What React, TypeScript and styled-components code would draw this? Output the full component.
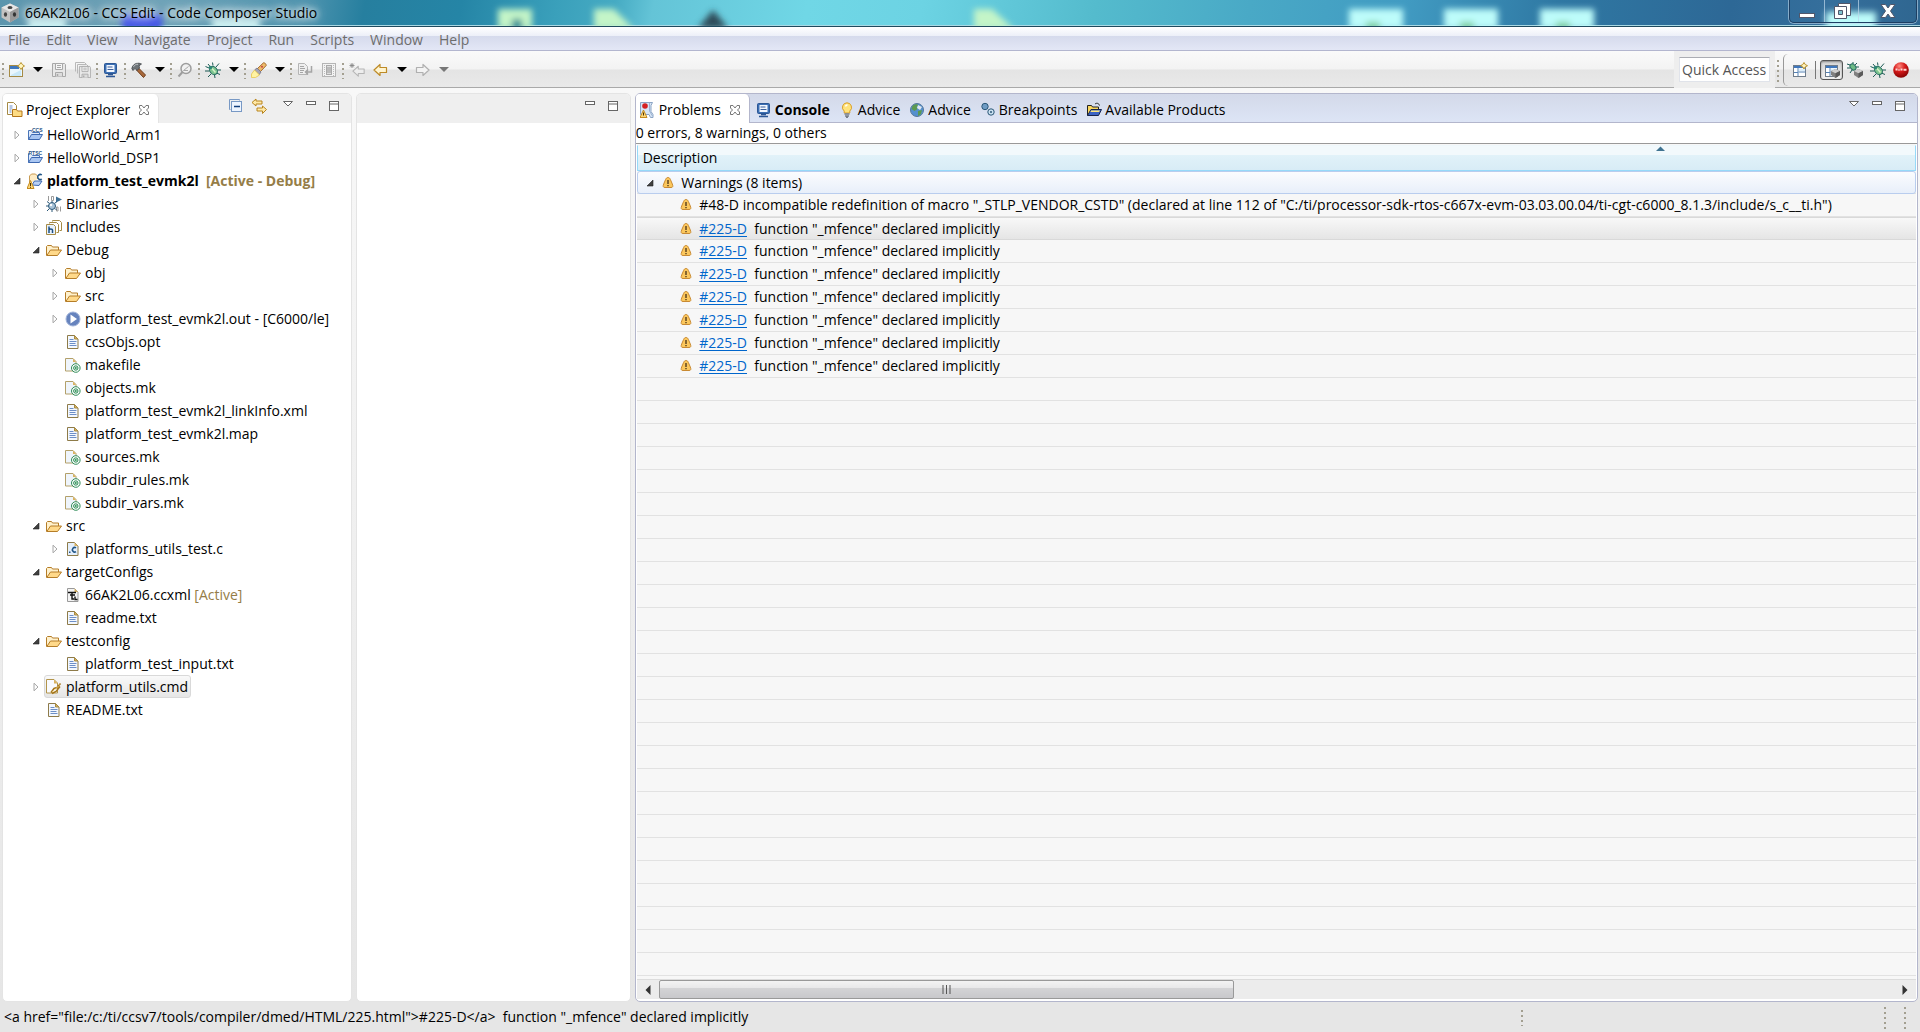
import React from "react";
import styled, { createGlobalStyle, css } from "styled-components";

const GlobalStyle = createGlobalStyle`
  * { box-sizing: border-box; }
  html, body, #root { height: 100%; margin: 0; }
  body {
    font-family: "Open Sans", "Noto Sans", sans-serif;
    font-size: 14px;
    line-height: 23px;
    color: #000;
    background: #e6e6e6;
    overflow: hidden;
  }
  button, input { font: inherit; color: inherit; }
  svg { display: block; flex: none; }
`;

const bare = css`
  border: 0;
  padding: 0;
  background: none;
  display: flex;
  align-items: center;
  justify-content: center;
  flex: none;
`;

const Shell = styled.div`
  height: 100%;
  min-height: 100vh;
  display: flex;
  flex-direction: column;
`;

/* ---------- title bar ---------- */

const TitleBar = styled.header`
  height: 27px;
  flex: none;
  position: relative;
  display: flex;
  justify-content: space-between;
  align-items: flex-start;
  overflow: hidden;
  background: linear-gradient(
    100deg,
    #5b95ad 0%, #6fa3b8 8%, #4c93ae 16%, #267f9f 19%, #2585a6 24%, #3aa0bb 29%,
    #46abc3 32%, #64c4d7 34%, #70d7e6 42%, #6cd3e3 48%, #54bbcd 57%, #49a9c6 65%,
    #419bc2 73%, #2f78a3 81%, #2d6896 90%, #356f9c 95%, #2f6690 100%
  );
  border-bottom: 1px solid #1f4a5e;
  box-shadow: inset 0 -1px 0 #a9d9e4;
`;

const TitleArt = styled.svg`
  position: absolute;
  inset: 0;
  width: 100%;
  height: 26px;
`;

const TitleText = styled.h1`
  position: relative;
  display: flex;
  align-items: center;
  gap: 5px;
  margin: 0;
  height: 26px;
  font-size: 14px;
  font-weight: 400;
  line-height: 26px;
  text-shadow: 0 0 6px #fff, 0 0 10px #fff, 0 0 16px rgba(255, 255, 255, 0.7);
`;

const WindowButtons = styled.div`
  position: relative;
  display: flex;
  height: 23px;
  margin-right: 3px;
  border: 1px solid #1d3f63;
  border-top: 0;
  border-radius: 0 0 5px 5px;
  box-shadow: 0 0 0 1px rgba(190, 215, 235, 0.6);
`;

const WindowButton = styled.button<{ $wide?: boolean }>`
  ${bare}
  width: ${(p) => (p.$wide ? 58 : 34)}px;
  height: 22px;
  & + & { border-left: 1px solid rgba(190, 215, 235, 0.7); }
`;

/* ---------- menu ---------- */

const MenuBar = styled.nav`
  height: 24px;
  flex: none;
  display: flex;
  padding-top: 1px;
  background: linear-gradient(#fff 0, #eceff8 9px, #d5daec 9px, #e3e7f6 23px);
  border-bottom: 1px solid #b3b6cf;
`;

const MenuItem = styled.button`
  ${bare}
  padding: 0 8px;
  color: #6d6d6d;
`;

/* ---------- toolbar ---------- */

const ToolBar = styled.div`
  height: 37px;
  flex: none;
  display: flex;
  align-items: stretch;
  justify-content: space-between;
  background: linear-gradient(#fafafa 0, #f3f3f3 18px, #e4e4e4 19px, #e9e9e9 36px);
`;

const ToolGroup = styled.div`
  flex: 1;
  display: flex;
  align-items: center;
  padding: 2px 0 0 1px;
  border-bottom: 1px solid #a9a9a9;
`;

const Grip = styled.span<{ $tall?: boolean }>`
  width: 4px;
  height: ${(p) => (p.$tall ? 24 : 18)}px;
  flex: none;
  background: repeating-linear-gradient(
    transparent 0, transparent 2px, #a39f90 2px, #a39f90 4px, transparent 4px, transparent 5px
  );
  background-size: 2px 100%;
  background-position: 1px 0;
  background-repeat: no-repeat;
`;

const ToolButton = styled.button`
  ${bare}
  width: 24px;
  height: 24px;
`;

const DropButton = styled.button<{ $dim?: boolean }>`
  ${bare}
  width: 18px;
  height: 24px;
  color: ${(p) => (p.$dim ? "#777" : "#000")};
`;

const QuickWrap = styled.div`
  padding: 6px 5px 5px;
  background: #eee;
`;

const QuickInput = styled.input`
  display: block;
  width: 91px;
  height: 25px;
  padding: 0 2px;
  border: 1px solid #e0e3ea;
  border-top-color: #abadb3;
  background: #fff;
  outline: 0;
  &::placeholder { color: #555; opacity: 1; }
`;

const Perspectives = styled.div`
  display: flex;
  align-items: center;
  padding: 1px 8px 0 1px;
  border-bottom: 1px solid #a9a9a9;
`;

const PerspectiveList = styled.div`
  align-self: stretch;
  display: flex;
  align-items: center;
  margin: 2px 0 1px 3px;
  padding-left: 4px;
  border-left: 1px solid #999;
  border-radius: 5px 0 0 5px;
`;

const Divider = styled.span`
  width: 1px;
  height: 18px;
  margin: 0 4px;
  background: #777;
`;

const PerspectiveButton = styled.button<{ $active?: boolean }>`
  ${bare}
  width: 23px;
  height: 20px;
  border-radius: 3px;
  ${(p) =>
    p.$active &&
    css`
      border: 1px solid #555;
      background: linear-gradient(#d5d5d5, #f2f2f2);
      box-shadow: inset 0 1px 2px #888;
    `}
`;

/* ---------- work area ---------- */

const Workbench = styled.main`
  flex: 1;
  min-height: 0;
  display: grid;
  grid-template-columns: minmax(0, 350fr) minmax(0, 274fr) minmax(0, 1282fr);
  gap: 4px;
  padding: 5px 2px 0;
  background: linear-gradient(#f8f8f8, #e6e6e6);
`;

const Pane = styled.section<{ $active?: boolean }>`
  min-width: 0;
  min-height: 0;
  display: flex;
  flex-direction: column;
  overflow: hidden;
  background: #fff;
  border: 1px solid ${(p) => (p.$active ? "#b3b6cc" : "#e4e4e4")};
  border-radius: 5px;
  ${(p) => p.$active && css`padding-bottom: 2px;`}
`;

const TabStrip = styled.div<{ $active?: boolean }>`
  height: 29px;
  flex: none;
  display: flex;
  justify-content: space-between;
  background: ${(p) => (p.$active ? "linear-gradient(#d3d9e9, #dde5f6)" : "#efefef")};
  ${(p) => p.$active && css`box-shadow: inset 0 -1px 0 #b3b6cc;`}
`;

const Tabs = styled.div`
  flex: 1;
  display: flex;
`;

const Tab = styled.div<{ $selected?: boolean; $edge?: string }>`
  display: flex;
  align-items: center;
  padding: 2px 5px 0 4px;
  ${(p) =>
    p.$selected &&
    css`
      padding-right: 6px;
      margin-right: 2px;
      background: #fff;
      border-right: 1px solid ${p.$edge || "#e4e4e4"};
      border-radius: 0 5px 0 0;
    `}
`;

const TabButton = styled.button<{ $bold?: boolean }>`
  ${bare}
  gap: 3px;
  font-weight: ${(p) => (p.$bold ? 700 : 400)};
`;

const IconButton = styled.button`
  ${bare}
  width: 20px;
  height: 18px;
`;

const CloseButton = styled(IconButton)`
  width: 16px;
  margin-left: 6px;
`;

const PaneTools = styled.div`
  display: flex;
  align-items: flex-start;
  gap: 3px;
  padding: 3px 7px 0 0;
`;

const ToolSpacer = styled.span`
  width: 3px;
`;

/* ---------- tree ---------- */

const Tree = styled.ul`
  list-style: none;
  margin: 0;
  padding: 0;
`;

const TreeRow = styled.li<{ $depth: number }>`
  height: 23px;
  display: flex;
  align-items: center;
  padding-left: ${(p) => 6 + p.$depth * 19}px;
`;

const Toggle = styled.button`
  ${bare}
  width: 16px;
  height: 16px;
`;

const NodeLabel = styled.span<{ $selected?: boolean; $bold?: boolean }>`
  display: flex;
  align-items: center;
  gap: 4px;
  height: 23px;
  padding: 0 2px 0 1px;
  white-space: pre;
  border: 1px solid transparent;
  border-radius: 3px;
  font-weight: ${(p) => (p.$bold ? 700 : 400)};
  ${(p) =>
    p.$selected &&
    css`
      border-color: #d9d9d9;
      background: linear-gradient(#f9f9f9, #e6e6e6);
    `}
`;

const Decoration = styled.span`
  color: #957d47;
`;

/* ---------- problems ---------- */

const Summary = styled.p`
  margin: 0;
  flex: none;
  height: 21px;
  line-height: 20px;
  border-bottom: 1px solid #999;
`;

const TableArea = styled.div`
  flex: 1;
  min-height: 0;
  overflow: hidden;
  margin: 0 1px;
  padding-top: 1px;
  background: repeating-linear-gradient(#f7f7f7 0, #f7f7f7 22px, #e2e2e2 22px, #e2e2e2 23px);
  background-position: 0 4px;
`;

const ProblemTable = styled.table`
  width: 100%;
  border-collapse: separate;
  border-spacing: 0;
  table-layout: fixed;
`;

const HeadCell = styled.th`
  position: relative;
  height: 26px;
  padding: 0 5px 1px;
  text-align: left;
  font-weight: 400;
  line-height: 22px;
  border: 1px solid #96d9f9;
  border-top-color: #eef7fb;
  background: linear-gradient(#f2f9fc 0, #f2f9fc 9px, #e1f2f9 9px, #d8ecf6 100%);
`;

const SortMark = styled.svg`
  position: absolute;
  left: 80%;
  top: 0;
  margin-left: -4px;
`;

const ProblemCell = styled.td<{ $kind?: "group" | "focus" }>`
  height: 23px;
  padding: 0 0 0 ${(p) => (p.$kind === "group" ? 4 : 43)}px;
  overflow: hidden;
  white-space: pre;
  line-height: 22px;
  background: #f7f7f7;
  border-bottom: 1px solid #e2e2e2;
  ${(p) =>
    p.$kind === "group" &&
    css`
      border: 1px solid #b9cdee;
      border-radius: 3px;
      line-height: 21px;
      background: linear-gradient(#fbfcfe, #e8effa);
    `}
  ${(p) =>
    p.$kind === "focus" &&
    css`
      border-top: 1px solid #d9d9d9;
      border-bottom-color: #d9d9d9;
      line-height: 21px;
      background: linear-gradient(#f8f8f8, #e5e5e5);
    `}
`;

const CellRow = styled.div`
  display: flex;
  align-items: center;
  gap: 4px;
`;

const DiagnosticLink = styled.a`
  color: #0066cc;
  text-decoration: underline;
  text-underline-offset: 2px;
`;

const ScrollBar = styled.div`
  flex: none;
  height: 20px;
  margin: 0 1px;
  display: grid;
  grid-template-columns: 22px minmax(0, 573fr) minmax(0, 657fr) 22px;
  align-items: center;
  background: #ececec;
  border-top: 1px solid #dcdcdc;
`;

const ScrollThumb = styled.div`
  height: 19px;
  display: flex;
  align-items: center;
  justify-content: center;
  border: 1px solid #999;
  border-radius: 2px;
  background: linear-gradient(#f3f3f3 0, #e8e8e9 7px, #d4d4d6 7px, #c8c8cb 100%);
`;

const ScrollButton = styled.button`
  ${bare}
  height: 19px;
`;

/* ---------- status ---------- */

const StatusBar = styled.footer`
  flex: none;
  height: 30px;
  display: flex;
  align-items: center;
  padding: 0 13px 1px 4px;
  background: #e6e6e6;
  white-space: pre;
`;

const StatusText = styled.span`
  flex: 1516;
`;

const StatusSlot = styled.span`
  flex: 359;
`;

const StatusGrip = styled(Grip)`
  margin-right: 16px;
  &:last-child { margin-right: 0; }
`;

/* ---------- icons ---------- */

const Svg = ({ children, w = 16, h = 16 }: { children: React.ReactNode; w?: number; h?: number }) => (
  <svg width={w} height={h} viewBox={`0 0 ${w} ${h}`} fill="none" aria-hidden="true">
    {children}
  </svg>
);

const DownIcon = () => (
  <Svg w={10} h={6}><path d="M0 0h10L5 5z" fill="currentColor" /></Svg>
);

const NewIcon = () => (
  <Svg>
    <rect x="0.5" y="3.5" width="13" height="11" fill="#e9f6fd" stroke="#a58a45" />
    <path d="M1 4h9v3H1z" fill="#3f77bd" />
    <path d="M2 13l10-5v6H2z" fill="#c9e8f8" />
    <path d="M12 .5l1.400 2.100 2.100 1.400-2.100 1.400L12 7.500l-1.400-2.100L8.500 4l2.100-1.400z" fill="#fff6c0" stroke="#b9912c" />
  </Svg>
);

const Disk = ({ x = 0, y = 0 }: { x?: number; y?: number }) => (
  <g transform={`translate(${x} ${y})`} stroke="#a8a8a8">
    <path d="M.5.5h12l1 1v12H.5z" fill="#e8e8e8" />
    <path d="M3.500.5h7v6h-7z" fill="#f6f6f6" />
    <path d="M3.500 13.500v-4h7v4" fill="#dcdcdc" />
    <path d="M5 2.500h4M5 4.500h4" />
    <path d="M5.500 11v2" strokeWidth="1.500" />
  </g>
);
const SaveIcon = () => <Svg><Disk x={1} y={1} /></Svg>;
const SaveAllIcon = () => (
  <Svg>
    <path d="M.5 9.500v-9h9l1.500 1.500M2.500 11.500v-9h9l1.500 1.500" stroke="#b8b8b8" />
    <g transform="translate(4 4) scale(.86)"><Disk /></g>
  </Svg>
);

const ConsoleIcon = () => (
  <Svg>
    <rect x="1.500" y="1.500" width="12" height="10" rx="1" fill="#3b6fb4" stroke="#2d5795" />
    <rect x="3.500" y="3" width="8" height="7" fill="#f2f7ff" />
    <path d="M4.500 5h5M4.500 7.500h6" stroke="#3b5f9b" />
    <path d="M5 12.500h5M3 14.500h9" stroke="#2d5795" strokeWidth="1.500" />
  </Svg>
);

const HammerIcon = () => (
  <Svg>
    <path d="M7 5.500l7.500 7.500-2 2.500L5.500 8z" fill="#a9683a" stroke="#6f3d1b" />
    <path d="M.8 6.500C1.500 3 4 1 8 1.200L10.500 2 8 3.800 8.500 6l-2.500 2.500L4 6.500l-2 2z" fill="#6e7478" stroke="#3e4346" strokeWidth=".8" />
    <path d="M2.500 4.800C3.500 3 5 2.200 7 2.200" stroke="#c4c9cc" />
  </Svg>
);

const SearchIcon = () => (
  <Svg>
    <circle cx="9" cy="6.500" r="5" fill="#f1f1f1" stroke="#9d9d9d" strokeWidth="1.500" />
    <path d="M5.500 10L1.500 14.500" stroke="#9d9d9d" strokeWidth="2" />
    <path d="M11.500 4.500l-5 4h4.500" stroke="#a8a8a8" />
  </Svg>
);

const BugIcon = () => (
  <Svg>
    <path d="M4 6L.5 4.500M4.500 9L0 9M6 12l-3 3M8 3.500L7.500.5M11 5l3-3.500M12 8h4M11.500 11l3.500 1.500M9.500 13l.5 3M5.500 5L3 2" stroke="#1d5b55" />
    <ellipse cx="8.500" cy="8.500" rx="3.500" ry="4.500" transform="rotate(-40 8.500 8.500)" fill="#7cc48f" stroke="#22695f" />
    <path d="M7 6.500l3.500 4" stroke="#d5f2c8" strokeWidth="1.500" />
    <circle cx="5.500" cy="5.500" r="1.800" fill="#2f8577" />
  </Svg>
);

const TorchIcon = () => (
  <Svg>
    <path d="M6 7L12.500.8c1.500 0 2.700 1.200 2.700 2.700L9 10z" fill="#edbb6b" stroke="#a36a2c" />
    <path d="M3.500 8l2.500-2 4 4-2 3z" fill="#a4a4b4" stroke="#74748a" strokeWidth=".8" />
    <path d="M3.500 8l5 5-4 2.500L.5 15.500V12z" fill="#fff3a2" stroke="#e7c750" strokeWidth=".8" />
    <circle cx="11" cy="4.800" r="1" fill="#c44" />
  </Svg>
);

const WrapIcon = () => (
  <Svg>
    <path d="M1.500 1.500h6l3 3v8h-9z" fill="#efefef" stroke="#b5b5b5" />
    <path d="M3 4.500h4M3 6.500h5M3 8.500h4M3 10.500h3" stroke="#a5a5a5" />
    <path d="M14.500 4v6H8.500M11 7.500L8.500 10l2.500 2.500" stroke="#a5a5a5" strokeWidth="1.500" />
  </Svg>
);

const BlockIcon = () => (
  <Svg>
    <rect x="1.500" y="1.500" width="13" height="13" fill="#f3f3f3" stroke="#b5b5b5" />
    <path d="M3.500 3v11M12.500 3v11" stroke="#bbb" strokeDasharray="1 1" />
    <rect x="5.500" y="3.500" width="5" height="9" fill="#ddd" stroke="#aaa" />
    <path d="M6 6h4M6 8h4M6 10h4" stroke="#999" />
  </Svg>
);

const ArrowShape = ({ stroke, fill, flip }: { stroke: string; fill: string; flip?: boolean }) => (
  <path
    d="M1 8l6-5.500v3h6.500v5H7v3z"
    transform={flip ? "matrix(-1 0 0 1 15 0)" : undefined}
    fill={fill}
    stroke={stroke}
    strokeWidth="1.200"
    strokeLinejoin="round"
  />
);
const BackIcon = () => <Svg><ArrowShape stroke="#bd8a26" fill="#fff4cf" /></Svg>;
const ForwardIcon = () => <Svg><ArrowShape stroke="#b0b0b0" fill="#f3f3f3" flip /></Svg>;
const LastEditIcon = () => (
  <Svg>
    <g transform="translate(3 2) scale(.9)"><ArrowShape stroke="#b5b5b5" fill="#ededed" /></g>
    <path d="M3 1v5M.5 3.500h5M1.200 1.700l3.600 3.600M4.800 1.700L1.200 5.300" stroke="#888" strokeWidth=".9" />
  </Svg>
);

const PerspectiveGrid = () => (
  <>
    <rect x="1.500" y="3.500" width="12" height="11" fill="#fff" stroke="#6f7c8a" />
    <path d="M2 4h11v2H2z" fill="#3f77bd" />
    <path d="M6 6v8M6.500 10h7M2 10.500h4" stroke="#5582b5" />
    <path d="M7 6.500h6V9H7z" fill="#dceefb" />
  </>
);
const Cube = () => (
  <g transform="translate(7 7)">
    <path d="M4.500 0L9 2v4L4.500 9 0 6V2z" fill="#808080" />
    <path d="M4.500 0L9 2 4.500 4.300 0 2z" fill="#cfcfcf" />
    <path d="M4.500 4.300V9L9 6V2z" fill="#5a5a5a" />
  </g>
);
const OpenPerspectiveIcon = () => (
  <Svg>
    <PerspectiveGrid />
    <path d="M12 .5l1.200 2 2.300 1.200-2.300 1.300-1.200 2-1.200-2-2.300-1.300 2.300-1.200z" fill="#fff3bd" stroke="#b9912c" />
  </Svg>
);
const EditPerspectiveIcon = () => <Svg><PerspectiveGrid /><Cube /></Svg>;
const DebugPerspectiveIcon = () => (
  <Svg>
    <path d="M3 3L0 2M3 6H0M5 8l-2 3M6 2V0M8 3l2-2M9 5h3" stroke="#1d5b55" />
    <ellipse cx="6" cy="5" rx="2.500" ry="3.500" transform="rotate(-40 6 5)" fill="#6dbb85" stroke="#22695f" />
    <Cube />
  </Svg>
);
const SimpleIcon = () => (
  <Svg>
    <defs>
      <radialGradient id="ball" cx=".4" cy=".25" r=".8">
        <stop offset="0" stopColor="#ff8a80" />
        <stop offset=".45" stopColor="#d51a1a" />
        <stop offset="1" stopColor="#7d0000" />
      </radialGradient>
    </defs>
    <circle cx="8" cy="8" r="7.800" fill="url(#ball)" />
    <path d="M2.500 7.500h2M5.500 8h1M7.500 7.500h2M10.500 7.800h3" stroke="#ffd9d6" strokeWidth="2" />
  </Svg>
);

const MenuTriangleIcon = () => <Svg w={12} h={18}><path d="M1.500 4.500h9L6 9z" stroke="#666" fill="#fff" /></Svg>;
const MinimizeIcon = () => <Svg w={12} h={18}><rect x="1.500" y="4.500" width="9" height="3" fill="#fff" stroke="#666" /></Svg>;
const MaximizeIcon = () => (
  <Svg w={12} h={18}><rect x="1.500" y="4.500" width="9" height="9" fill="#fff" stroke="#666" /><path d="M1 7h10" stroke="#666" /></Svg>
);
const CloseIcon = () => (
  <Svg w={12} h={12}>
    <path d="M1.500 1.500h2.500L6 4l2-2.500h2.500V4L8.500 6l2 2v2.500H8L6 8l-2 2.500H1.500V8l2-2-2-2z" fill="#fff" stroke="#777" />
  </Svg>
);
const CollapseAllIcon = () => (
  <Svg>
    <path d="M2.500 11.500h-1v-10h10v1" stroke="#7899c5" />
    <rect x="3.500" y="3.500" width="10" height="10" fill="#eef5ff" stroke="#7899c5" />
    <path d="M6 8.500h6" stroke="#123f7c" strokeWidth="1.500" />
  </Svg>
);
const LinkEditorIcon = () => (
  <Svg>
    <path d="M1 4.500L5 1v2h6v3H5v2z" fill="#ffe9a8" stroke="#b9851e" />
    <path d="M15.500 11.500L11.500 8v2H6v3h5.500v2.500z" fill="#ffe9a8" stroke="#b9851e" />
  </Svg>
);

const ExplorerIcon = () => (
  <Svg>
    <path d="M.5.5h6l3 3v9h-9z" fill="#fff" stroke="#a58a45" />
    <path d="M2.500 4h3M2.500 6h3M2.500 8h2M2.500 10h2" stroke="#6d8fc7" />
    <path d="M5.500 7.500h4l1 1.500h4.500v5.500H5.500z" fill="#fddc84" stroke="#b4761a" />
  </Svg>
);

const ProjectFolder = () => (
  <>
    <path d="M1.500 12.500v-9h3l1 2h7v3" fill="#dfeafa" stroke="#4a75b8" />
    <path d="M1.500 12.500l3-5h11l-3 5z" fill="#a9c6f2" stroke="#3d68b0" />
  </>
);
const IconLabel = styled.text`
  font-family: "Liberation Sans", sans-serif;
  font-weight: 700;
`;
const CcsProjectIcon = () => (
  <Svg>
    <ProjectFolder />
    <path d="M5 0h11v5H5z" fill="#fff" />
    <IconLabel x="5" y="4.500" fontSize="5" fill="#1f5486">CCS</IconLabel>
  </Svg>
);
const RtscProjectIcon = () => (
  <Svg>
    <ProjectFolder />
    <path d="M2 0h14v5H2z" fill="#fff" />
    <IconLabel x="1.500" y="4.500" fontSize="5" fill="#1f5486">RTSC</IconLabel>
  </Svg>
);
const ActiveProjectIcon = () => (
  <Svg>
    <path d="M2.500 11V3l2-2h4l2 2v3" fill="#fdebc4" stroke="#c99b52" />
    <path d="M5 12l2.500-4h7.500l-3 4.500z" fill="#b9d0f5" stroke="#3d68b0" />
    <path d="M14.800 2A2.500 2.500 0 1 0 14.800 6" stroke="#1f5486" strokeWidth="1.500" />
    <path d="M3.500 7.500L7 15.500H0z" fill="#fcd676" stroke="#c48a1e" />
    <path d="M3.500 10v3M3.500 13.800v1" stroke="#4a2f00" />
  </Svg>
);
const BinariesIcon = () => (
  <Svg>
    <path d="M2.500 0v5M5.500 .5h2v4h-2zM10.500 11h1.500v4h-1.500zM14.500 10.500v5" stroke="#999" />
    <path d="M10 .5l6 3-6 3z" fill="#3c6f94" />
    <circle cx="6" cy="10" r="3.500" fill="#a8c3d8" stroke="#2c5878" />
    <path d="M3 7L1 5.500M2.500 10H0M3 13l-2 2M6 6.500V5M6 13.500V16M9 7l2-1.500M9 12.500l1.500 1.500" stroke="#2c5878" />
    <circle cx="5" cy="9" r="1.200" fill="#fff" />
  </Svg>
);
const IncludesIcon = () => (
  <Svg>
    <path d="M6.500 2.500v-1h7l2 2v8h-2" fill="#fff" stroke="#a58a45" />
    <path d="M3.500 4.500v-1h7l2 2v8h-2" fill="#fff" stroke="#a58a45" />
    <path d="M.5 5.500h7l2 2v8h-9z" fill="#e7f1fc" stroke="#a58a45" />
    <path d="M3 7.500v6.500M3 11c0-1.500 3.500-1.500 3.500 0v3" stroke="#1d4f83" strokeWidth="1.500" />
  </Svg>
);
const FolderIcon = () => (
  <Svg>
    <path d="M.5 13.500v-9l1-1h4l1 1.500h6v3" fill="#fff1cc" stroke="#b57d28" />
    <path d="M.8 13.500l3.700-5.500H15.500l-4 5.500z" fill="#ffd98a" stroke="#b57d28" strokeLinejoin="round" />
  </Svg>
);
const OutIcon = () => (
  <Svg>
    <circle cx="8" cy="8" r="7" fill="#6683bd" stroke="#9fb2d9" />
    <path d="M5.500 3.500L12 8l-6.500 4.500z" fill="#fff" />
  </Svg>
);
const FileIcon = () => (
  <Svg>
    <path d="M2.500 1.500h7l3.500 3.500v9.500H2.500z" fill="#f3f8ff" stroke="#8e7b49" />
    <path d="M9.500 1.500v3.500H13z" fill="#d9b25f" stroke="#a58a45" />
    <path d="M4.500 5.500h4M4.500 7.500h7M4.500 9.500h6M4.500 11.500h7" stroke="#6d8fc7" />
  </Svg>
);
const MakeIcon = () => (
  <Svg>
    <path d="M.5 1.500h7.500l3 3v9.500H.5z" fill="#eff5fc" stroke="#b3a06a" />
    <path d="M8 1.500v3.500h3z" fill="#d9b25f" />
    <circle cx="10.800" cy="11" r="4.300" fill="#fff" stroke="#2e8b57" />
    <circle cx="10.800" cy="11" r="2.200" fill="#e0f6e6" stroke="#2e8b57" />
    <circle cx="10.800" cy="11" r=".9" fill="#2e8b57" />
  </Svg>
);
const CFileIcon = () => (
  <Svg>
    <path d="M2.500 1.500h7l3.500 3.500v9.500H2.500z" fill="#e4effc" stroke="#8e7b49" />
    <path d="M9.500 1.500v3.500H13z" fill="#d9b25f" />
    <path d="M11 6.800a2.300 2.300 0 1 0 0 3.800" stroke="#1f5486" strokeWidth="1.600" />
    <path d="M4 10.500h1.500v1.500H4z" fill="#1f5486" />
  </Svg>
);
const CcxmlIcon = () => (
  <Svg>
    <path d="M2.500 1.500h7l3.500 3.500v9.500H2.500z" fill="#f3f3f3" stroke="#999" />
    <path d="M9.500 1.500v3.500H13z" fill="#d9b25f" />
    <path d="M3 5.500h8M5 8h5M7 6v6h2M10 9.500v3h2.500" stroke="#111" strokeWidth="1.400" />
  </Svg>
);
const CmdIcon = () => (
  <Svg>
    <path d="M.5.500h7.500l3.500 3.500v10H.5z" fill="#f9fbff" stroke="#b3954b" />
    <path d="M8 .5V4.500h3.500z" fill="#d9b25f" />
    <path d="M5 13.500l3-4 3-1 3.500-4M6 14.500l4-2 4-5" stroke="#a5761b" strokeWidth="1.500" />
    <path d="M6.500 13l7-7" stroke="#ffe08a" strokeDasharray="2 1" />
  </Svg>
);
const WarningIcon = () => (
  <Svg w={12} h={16}>
    <path d="M6 2.500c1.300 0 1.900.8 2.400 2l1.900 4.500c.9 2.200.7 3.500-1.300 3.500H3c-2 0-2.200-1.300-1.300-3.500l1.900-4.500c.5-1.200 1.100-2 2.400-2z" fill="#fbc75d" stroke="#c98a32" />
    <path d="M6 5v4M6 10v1.300" stroke="#5f4520" strokeWidth="1.500" />
  </Svg>
);
const ProblemsIcon = () => (
  <Svg>
    <path d="M.5.5h12l-1.500 3v6l2 3v3h-2.500l-1.500-3H.5z" fill="#d7e5f5" stroke="#8ba4c5" />
    <path d="M9.500 1v8l3 5" stroke="#9db4d2" />
    <circle cx="5" cy="4" r="2.800" fill="#d62121" />
    <path d="M3.500 8l3.500 7.500H0z" fill="#fcd676" stroke="#c48a1e" />
    <path d="M3.500 10.500v3" stroke="#4a2f00" />
  </Svg>
);
const BulbIcon = () => (
  <Svg>
    <path d="M8 .8a4.600 4.600 0 0 0-2.800 8.200V11h5.600V9A4.600 4.600 0 0 0 8 .8z" fill="#ffe37c" stroke="#d99e27" />
    <path d="M6.500 4.500a2 2 0 0 1 2-1.500" stroke="#fff" strokeWidth="1.500" />
    <path d="M5.500 12h5M6 14h4M7 15.500h2" stroke="#777d88" strokeWidth="1.500" />
  </Svg>
);
const GlobeIcon = () => (
  <Svg>
    <circle cx="8" cy="8" r="6.500" fill="#5490cf" stroke="#55779b" />
    <path d="M3.500 4c2-2.500 5-2 6-1l-2 2 1 2-3 2-3-2zM9 9l4-1-1 4-3 2z" fill="#5d9a4e" />
    <path d="M9 3l4 2-2 3-3-2z" fill="#e0e7ee" />
  </Svg>
);
const BreakpointsIcon = () => (
  <Svg>
    <circle cx="5" cy="4.500" r="3.200" fill="#6f9cc4" stroke="#2c5878" />
    <circle cx="11" cy="10" r="3.200" fill="#c9e0f0" stroke="#2c5878" />
    <circle cx="11" cy="10" r="1" fill="#2c5878" />
  </Svg>
);
const ProductsIcon = () => (
  <Svg>
    <path d="M1.500 13.500v-10h4l1 1.500h6v3" fill="#fbd75d" stroke="#222" />
    <path d="M1.500 13.500L5 7.500h10.500l-3 6z" fill="#3b63c4" stroke="#15244f" />
    <path d="M5 8.500h9l-1 1.500H4.500z" fill="#ffe77b" />
    <path d="M9 2c2-1.500 4-.5 4.500 1.500" stroke="#222" />
  </Svg>
);
const AppIcon = () => (
  <Svg w={20} h={22}>
    <path d="M10 1.500l8.500 4v10L10 20.500l-8.500-5v-10z" fill="#c2c2c2" />
    <path d="M10 1.500l8.500 4L10 10 1.500 5.500z" fill="#e6e6e6" />
    <path d="M10 10l8.500-4.500v10L10 20.500z" fill="#999" />
    <ellipse cx="10" cy="5.500" rx="2.500" ry="1.500" fill="#444" />
    <ellipse cx="5.500" cy="12.500" rx="1.600" ry="2.200" fill="#444" />
    <ellipse cx="14.500" cy="12.500" rx="1.600" ry="2.200" fill="#333" />
  </Svg>
);

const ExpandedMark = () => <Svg w={8} h={8}><path d="M7 1v6H1z" fill="#404040" stroke="#222" strokeWidth=".6" /></Svg>;
const CollapsedMark = () => <Svg w={6} h={10}><path d="M1 1.200v7.600L5 5z" fill="#fff" stroke="#a6a6a6" /></Svg>;

/* ---------- data ---------- */

type Node = {
  label: string;
  depth: number;
  icon: React.ComponentType;
  open?: boolean;
  note?: string;
  bold?: boolean;
  selected?: boolean;
};

const nodes: Node[] = [
  { label: "HelloWorld_Arm1", depth: 0, icon: CcsProjectIcon, open: false },
  { label: "HelloWorld_DSP1", depth: 0, icon: RtscProjectIcon, open: false },
  { label: "platform_test_evmk2l", depth: 0, icon: ActiveProjectIcon, open: true, bold: true, note: "  [Active - Debug]" },
  { label: "Binaries", depth: 1, icon: BinariesIcon, open: false },
  { label: "Includes", depth: 1, icon: IncludesIcon, open: false },
  { label: "Debug", depth: 1, icon: FolderIcon, open: true },
  { label: "obj", depth: 2, icon: FolderIcon, open: false },
  { label: "src", depth: 2, icon: FolderIcon, open: false },
  { label: "platform_test_evmk2l.out - [C6000/le]", depth: 2, icon: OutIcon, open: false },
  { label: "ccsObjs.opt", depth: 2, icon: FileIcon },
  { label: "makefile", depth: 2, icon: MakeIcon },
  { label: "objects.mk", depth: 2, icon: MakeIcon },
  { label: "platform_test_evmk2l_linkInfo.xml", depth: 2, icon: FileIcon },
  { label: "platform_test_evmk2l.map", depth: 2, icon: FileIcon },
  { label: "sources.mk", depth: 2, icon: MakeIcon },
  { label: "subdir_rules.mk", depth: 2, icon: MakeIcon },
  { label: "subdir_vars.mk", depth: 2, icon: MakeIcon },
  { label: "src", depth: 1, icon: FolderIcon, open: true },
  { label: "platforms_utils_test.c", depth: 2, icon: CFileIcon, open: false },
  { label: "targetConfigs", depth: 1, icon: FolderIcon, open: true },
  { label: "66AK2L06.ccxml", depth: 2, icon: CcxmlIcon, note: " [Active]" },
  { label: "readme.txt", depth: 2, icon: FileIcon },
  { label: "testconfig", depth: 1, icon: FolderIcon, open: true },
  { label: "platform_test_input.txt", depth: 2, icon: FileIcon },
  { label: "platform_utils.cmd", depth: 1, icon: CmdIcon, open: false, selected: true },
  { label: "README.txt", depth: 1, icon: FileIcon },
];

const menus = ["File", "Edit", "View", "Navigate", "Project", "Run", "Scripts", "Window", "Help"];

type Tool = { name: string; icon: React.ComponentType; drop?: boolean; dim?: boolean };
const toolGroups: Tool[][] = [
  [{ name: "New", icon: NewIcon, drop: true }, { name: "Save", icon: SaveIcon }, { name: "Save All", icon: SaveAllIcon }],
  [{ name: "Terminal", icon: ConsoleIcon }],
  [{ name: "Build", icon: HammerIcon, drop: true }],
  [{ name: "Search", icon: SearchIcon }],
  [{ name: "Debug", icon: BugIcon, drop: true }],
  [{ name: "Find", icon: TorchIcon, drop: true }],
  [{ name: "Word Wrap", icon: WrapIcon }, { name: "Block Selection", icon: BlockIcon }],
  [
    { name: "Last Edit", icon: LastEditIcon },
    { name: "Back", icon: BackIcon, drop: true },
    { name: "Forward", icon: ForwardIcon, drop: true, dim: true },
  ],
];

const otherTabs = [
  { label: "Console", icon: ConsoleIcon, bold: true },
  { label: "Advice", icon: BulbIcon },
  { label: "Advice", icon: GlobeIcon },
  { label: "Breakpoints", icon: BreakpointsIcon },
  { label: "Available Products", icon: ProductsIcon },
];

const fenceWarnings = Array.from({ length: 7 }, (_, i) => ({ code: "#225-D", focused: i === 0 }));

/* ---------- parts ---------- */

const WindowControls = ({ menu }: { menu?: boolean }) => (
  <>
    {menu && <IconButton aria-label="View Menu"><MenuTriangleIcon /></IconButton>}
    <IconButton aria-label="Minimize"><MinimizeIcon /></IconButton>
    <IconButton aria-label="Maximize"><MaximizeIcon /></IconButton>
  </>
);

const TitleBackdrop = () => (
  <TitleArt preserveAspectRatio="none" viewBox="0 0 1920 26" aria-hidden="true">
    <defs>
      <filter id="soft" x="-30%" y="-30%" width="160%" height="160%"><feGaussianBlur stdDeviation="3" /></filter>
    </defs>
    <g filter="url(#soft)">
      <path d="M28 18h38v14H28zM212 18h48v14h-48z" fill="#c9eef0" />
      <path d="M122 14h40v16h-40z" fill="#3f52e6" />
      <path d="M498 9h34v20h-34zM594 9h20l20 20h-40zM974 9h18l22 20h-40z" fill="#c4f5c8" />
      <path d="M1349 9h54v20h-54zM1444 9h54v20h-54zM1540 9h54v20h-54zM1826 12h50v18h-50z" fill="#bdfcfa" />
      <path d="M1366 22h14v8h-14zM1460 22h14v8h-14zM1556 22h14v8h-14z" fill="#7fcf9f" />
      <path d="M698 28l15-18 15 18z" fill="#2d4c58" />
      <path d="M512 19h10v10h-10z" fill="#2f8f96" />
    </g>
  </TitleArt>
);

export default function App() {
  return (
    <Shell>
      <GlobalStyle />
      <TitleBar>
        <TitleBackdrop />
        <TitleText><AppIcon />66AK2L06 - CCS Edit - Code Composer Studio</TitleText>
        <WindowButtons>
          <WindowButton aria-label="Minimize window">
            <Svg w={18} h={18}><rect x="1.500" y="11.500" width="15" height="4" fill="#fff" stroke="#50576b" /></Svg>
          </WindowButton>
          <WindowButton aria-label="Restore window">
            <Svg w={18} h={18}>
              <path d="M5.500 1.500h12v12h-12z" fill="#fff" stroke="#50576b" />
              <path d="M1.500 4.500h12v12h-12z" fill="#fff" stroke="#50576b" />
              <path d="M5.500 8.500h4v4h-4z" fill="#7fc3cf" stroke="#50576b" />
            </Svg>
          </WindowButton>
          <WindowButton $wide aria-label="Close window">
            <Svg w={18} h={18}>
              <path d="M2 2.500h4.500L9 6l2.500-3.500H16L11.500 9l4.500 6.500h-4.500L9 12l-2.500 3.500H2L6.500 9z" fill="#fff" stroke="#50576b" />
            </Svg>
          </WindowButton>
        </WindowButtons>
      </TitleBar>

      <MenuBar>
        {menus.map((m) => <MenuItem key={m}>{m}</MenuItem>)}
      </MenuBar>

      <ToolBar>
        <ToolGroup>
          {toolGroups.map((group, i) => (
            <React.Fragment key={i}>
              <Grip />
              {group.map(({ name, icon: Icon, drop, dim }) => (
                <React.Fragment key={name}>
                  <ToolButton aria-label={name}><Icon /></ToolButton>
                  {drop && <DropButton $dim={dim} aria-label={`${name} options`}><DownIcon /></DropButton>}
                </React.Fragment>
              ))}
            </React.Fragment>
          ))}
        </ToolGroup>
        <QuickWrap>
          <QuickInput aria-label="Quick Access" placeholder="Quick Access" />
        </QuickWrap>
        <Perspectives>
          <Grip $tall />
          <PerspectiveList>
            <PerspectiveButton aria-label="Open Perspective"><OpenPerspectiveIcon /></PerspectiveButton>
            <Divider />
            <PerspectiveButton $active aria-label="CCS Edit"><EditPerspectiveIcon /></PerspectiveButton>
            <PerspectiveButton aria-label="CCS Debug"><DebugPerspectiveIcon /></PerspectiveButton>
            <PerspectiveButton aria-label="Debug perspective"><BugIcon /></PerspectiveButton>
            <PerspectiveButton aria-label="CCS Simple"><SimpleIcon /></PerspectiveButton>
          </PerspectiveList>
        </Perspectives>
      </ToolBar>

      <Workbench>
        <Pane>
          <TabStrip>
            <Tabs>
              <Tab $selected>
                <TabButton><ExplorerIcon />Project Explorer</TabButton>
                <CloseButton aria-label="Close Project Explorer"><CloseIcon /></CloseButton>
              </Tab>
            </Tabs>
            <PaneTools>
              <IconButton aria-label="Collapse All"><CollapseAllIcon /></IconButton>
              <IconButton aria-label="Link with Editor"><LinkEditorIcon /></IconButton>
              <ToolSpacer />
              <WindowControls menu />
            </PaneTools>
          </TabStrip>
          <Tree role="tree">
            {nodes.map((n, i) => (
              <TreeRow key={i} $depth={n.depth} role="treeitem" aria-expanded={n.open} aria-level={n.depth + 1}>
                <Toggle aria-label={`Toggle ${n.label}`} disabled={n.open === undefined}>
                  {n.open === true && <ExpandedMark />}
                  {n.open === false && <CollapsedMark />}
                </Toggle>
                <NodeLabel $bold={n.bold} $selected={n.selected}>
                  <n.icon />
                  <span>{n.label}{n.note && <Decoration>{n.note}</Decoration>}</span>
                </NodeLabel>
              </TreeRow>
            ))}
          </Tree>
        </Pane>

        <Pane>
          <TabStrip>
            <Tabs />
            <PaneTools><WindowControls /></PaneTools>
          </TabStrip>
        </Pane>

        <Pane $active>
          <TabStrip $active>
            <Tabs>
              <Tab $selected $edge="#b3b6cc">
                <TabButton><ProblemsIcon />Problems</TabButton>
                <CloseButton aria-label="Close Problems"><CloseIcon /></CloseButton>
              </Tab>
              {otherTabs.map(({ label, icon: Icon, bold }, i) => (
                <Tab key={i}><TabButton $bold={bold}><Icon />{label}</TabButton></Tab>
              ))}
            </Tabs>
            <PaneTools><WindowControls menu /></PaneTools>
          </TabStrip>
          <Summary>0 errors, 8 warnings, 0 others</Summary>
          <TableArea>
            <ProblemTable>
              <thead>
                <tr>
                  <HeadCell scope="col">
                    Description
                    <SortMark width="9" height="5" viewBox="0 0 9 5"><path d="M0 5l4.500-4.500L9 5z" fill="#3f7391" /></SortMark>
                  </HeadCell>
                </tr>
              </thead>
              <tbody>
                <tr>
                  <ProblemCell $kind="group">
                    <CellRow>
                      <Toggle aria-label="Toggle warnings"><ExpandedMark /></Toggle>
                      <WarningIcon />
                      <span>&nbsp;Warnings (8 items)</span>
                    </CellRow>
                  </ProblemCell>
                </tr>
                <tr>
                  <ProblemCell>
                    <CellRow>
                      <WarningIcon />
                      <span>&nbsp;#48-D incompatible redefinition of macro "_STLP_VENDOR_CSTD" (declared at line 112 of "C:/ti/processor-sdk-rtos-c667x-evm-03.03.00.04/ti-cgt-c6000_8.1.3/include/s_c__ti.h")</span>
                    </CellRow>
                  </ProblemCell>
                </tr>
                {fenceWarnings.map((w, i) => (
                  <tr key={i}>
                    <ProblemCell $kind={w.focused ? "focus" : undefined}>
                      <CellRow>
                        <WarningIcon />
                        <span>&nbsp;<DiagnosticLink href="#225-D">{w.code}</DiagnosticLink>{"  function \"_mfence\" declared implicitly"}</span>
                      </CellRow>
                    </ProblemCell>
                  </tr>
                ))}
              </tbody>
            </ProblemTable>
          </TableArea>
          <ScrollBar>
            <ScrollButton aria-label="Scroll left"><Svg w={6} h={10}><path d="M5.500 0v10L.5 5z" fill="#333" /></Svg></ScrollButton>
            <ScrollThumb>
              <Svg w={9} h={9}><path d="M1 0v9M4.500 0v9M8 0v9" stroke="#555" /></Svg>
            </ScrollThumb>
            <span />
            <ScrollButton aria-label="Scroll right"><Svg w={6} h={10}><path d="M.5 0v10l5-5z" fill="#333" /></Svg></ScrollButton>
          </ScrollBar>
        </Pane>
      </Workbench>

      <StatusBar>
        <StatusText>{"<a href=\"file:/c:/ti/ccsv7/tools/compiler/dmed/HTML/225.html\">#225-D</a>  function \"_mfence\" declared implicitly"}</StatusText>
        <Grip />
        <StatusSlot />
        <StatusGrip $tall />
        <StatusGrip $tall />
      </StatusBar>
    </Shell>
  );
}
